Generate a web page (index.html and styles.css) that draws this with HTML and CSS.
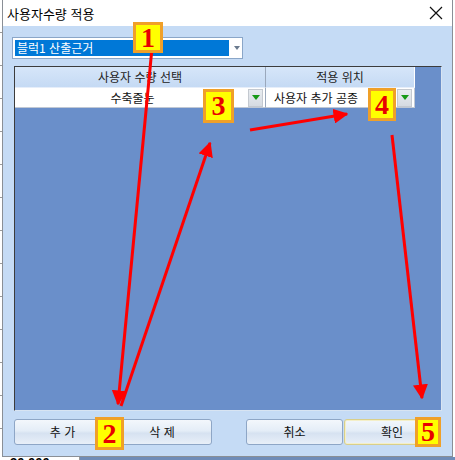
FILE: index.html
```html
<!DOCTYPE html>
<html lang="ko">
<head>
<meta charset="utf-8">
<title>사용자수량 적용</title>
<link rel="stylesheet" href="styles.css">
</head>
<body>
<div class="screen">
  <div class="dialog">
    <div class="titlebar">
      <span class="title">사용자수량 적용</span>
      <svg class="close" width="14" height="14" viewBox="0 0 14 14"><path d="M1 1 L13 13 M13 1 L1 13" stroke="#111" stroke-width="1.2" fill="none"/></svg>
    </div>
    <div class="client">
      <div class="combo">
        <span class="combo-sel">블럭1 산출근거</span>
        <span class="combo-arrow"></span>
      </div>
      <div class="grid">
        <div class="grid-head">
          <div class="hcell c1">사용자 수량 선택</div>
          <div class="hcell c2">적용 위치</div>
        </div>
        <div class="grid-row">
          <div class="cell c1"><span class="val center">수축줄눈</span><span class="ddbtn"><span class="tri"></span></span></div>
          <div class="cell c2"><span class="val left">사용자 추가 공종</span><span class="ddbtn"><span class="tri"></span></span></div>
        </div>
      </div>
      <div class="buttons">
        <div class="group">
          <button class="btn w97">추 가</button>
          <button class="btn w100">삭 제</button>
        </div>
        <div class="group">
          <button class="btn w97">취소</button>
          <button class="btn w96 default">확인</button>
        </div>
      </div>
    </div>
  </div>
  <div class="below">
    <div class="below-white"><span class="num">30,000</span></div>
    <div class="below-blue"></div>
  </div>

  <svg class="arrows" width="455" height="460" viewBox="0 0 455 460">
    <defs>
      <marker id="head" viewBox="0 0 10 10" refX="9" refY="5" markerWidth="5" markerHeight="5" orient="auto" markerUnits="strokeWidth">
        <path d="M0 0 L10 5 L0 10 Z" fill="#ff0000"/>
      </marker>
    </defs>
    <line x1="152" y1="48" x2="118" y2="404" stroke="#ff0000" stroke-width="3" marker-end="url(#head)"/>
    <line x1="121" y1="406" x2="210" y2="143" stroke="#ff0000" stroke-width="3" marker-end="url(#head)"/>
    <line x1="250" y1="130" x2="347" y2="114" stroke="#ff0000" stroke-width="3" marker-end="url(#head)"/>
    <line x1="392" y1="135" x2="422" y2="398" stroke="#ff0000" stroke-width="3" marker-end="url(#head)"/>
  </svg>

  <div class="badge b1">1</div>
  <div class="badge b2">2</div>
  <div class="badge b3">3</div>
  <div class="badge b4">4</div>
  <div class="badge b5">5</div>
</div>
</body>
</html>
```

FILE: styles.css
```css
* { box-sizing: border-box; }
html, body { margin: 0; padding: 0; }
body {
  width: 455px;
  height: 460px;
  overflow: hidden;
  background: #ffffff;
  font-family: "Noto Sans CJK KR", "Noto Sans", sans-serif;
  font-size: 12px;
  color: #111;
}
.screen {
  position: relative;
  width: 455px;
  height: 460px;
  background:
    repeating-linear-gradient(to bottom, transparent 0 32px, #9a9a9a 32px 33px) left top / 2px 100% no-repeat,
    #ffffff;
}
.dialog {
  margin-left: 2px;
  width: 451px;
  height: 457px;
  border: 1px solid #8a8f96;
  border-top: none;
  display: flex;
  flex-direction: column;
  background: #c5dbf5;
}
.titlebar {
  height: 26px;
  background: #ffffff;
  display: flex;
  align-items: center;
  justify-content: space-between;
  padding: 0 9px 0 4px;
}
.title {
  font-size: 13px;
  color: #000;
  line-height: 1;
}
.close { display: block; }
.client {
  flex: 1;
  display: flex;
  flex-direction: column;
  background: #c5dbf5;
}
.combo {
  margin: 11px 0 0 9px;
  width: 231px;
  height: 22px;
  background: #ffffff;
  border: 1px solid #8aa6c8;
  display: flex;
  align-items: center;
  padding: 0 0 0 2px;
}
.combo-sel {
  width: 214px;
  height: 16px;
  background: #0078d7;
  color: #ffffff;
  line-height: 16px;
  padding-left: 2px;
  font-size: 12px;
}
.combo-arrow {
  margin-left: 5px;
  width: 0;
  height: 0;
  border-left: 3px solid transparent;
  border-right: 3px solid transparent;
  border-top: 4px solid #6a7a8e;
}
.grid {
  margin: 7px 0 0 11px;
  width: 428px;
  height: 345px;
  background: #6a8fca;
  border: 1px solid;
  border-color: #3c3c3c #d8e4f2 #d8e4f2 #3c3c3c;
}
.grid-head, .grid-row { display: flex; }
.hcell {
  height: 21px;
  background: linear-gradient(#d6e6f9, #c5daf4);
  border-right: 1px solid #ffffff;
  border-bottom: 1px solid #e6eefa;
  display: flex;
  align-items: center;
  justify-content: center;
  color: #222;
  line-height: 1;
}
.c1 { width: 251px; }
.c2 { width: 149px; }
.hcell.c1 { border-right: 1px solid #9aa8bc; }
.cell {
  height: 20px;
  background: #ffffff;
  display: flex;
  align-items: center;
  border-right: 1px solid #c0c8d4;
  border-bottom: 1px solid #c0c8d4;
}
.cell.c1 { border-right: 1px solid #9aa8bc; }
.val { flex: 1; line-height: 1; color: #111; }
.val.center { text-align: center; padding-left: 2px; }
.val.left { padding-left: 8px; }
.ddbtn {
  width: 15px;
  height: 18px;
  margin-right: 2px;
  background: linear-gradient(#e8ecf0, #d6dbe2);
  border: 1px solid #c4c9d0;
  display: flex;
  align-items: center;
  justify-content: center;
}
.tri {
  width: 0;
  height: 0;
  border-left: 4px solid transparent;
  border-right: 4px solid transparent;
  border-top: 5px solid #169a16;
}
.buttons {
  margin: 8px 0 0 11px;
  width: 426px;
  display: flex;
  justify-content: space-between;
}
.group { display: flex; gap: 1px; }
.btn {
  height: 26px;
  border: 1px solid #8ea6c6;
  border-radius: 3px;
  background: linear-gradient(#f3f7fc 0%, #e4edf7 45%, #d6e2f1 55%, #e8eff8 100%);
  font-family: "Noto Sans CJK KR", "Noto Sans", sans-serif;
  font-size: 12px;
  color: #111;
  padding: 0;
  line-height: 1;
}
.btn.default { border-color: #d9cf8a; box-shadow: inset 0 0 0 1px #f4efc8; }
.w97 { width: 97px; }
.w100 { width: 100px; }
.w96 { width: 96px; }
.below {
  display: flex;
  height: 3px;
}
.below-white {
  width: 80px;
  position: relative;
  overflow: hidden;
  border-right: 1px solid #9a9a9a;
}
.num {
  position: absolute;
  left: 10px;
  top: -1px;
  font-family: "Liberation Sans", sans-serif;
  font-weight: bold;
  font-size: 13px;
  line-height: 1;
  color: #000;
}
.below-blue { flex: 1; background: #6f8cb8; }
.arrows {
  position: absolute;
  left: 0;
  top: 0;
  pointer-events: none;
}
.badge {
  position: absolute;
  background: #ffff00;
  border: 3px solid #f0a028;
  color: #e80000;
  font-family: "Liberation Serif", serif;
  font-weight: bold;
  font-size: 28px;
  line-height: 1;
  display: flex;
  align-items: center;
  justify-content: center;
}
.b1 { left: 133px; top: 22px; width: 30px; height: 31px; }
.b2 { left: 95px; top: 417px; width: 29px; height: 33px; }
.b3 { left: 203px; top: 89px; width: 31px; height: 34px; }
.b4 { left: 368px; top: 88px; width: 28px; height: 33px; }
.b5 { left: 415px; top: 417px; width: 26px; height: 30px; }
```
